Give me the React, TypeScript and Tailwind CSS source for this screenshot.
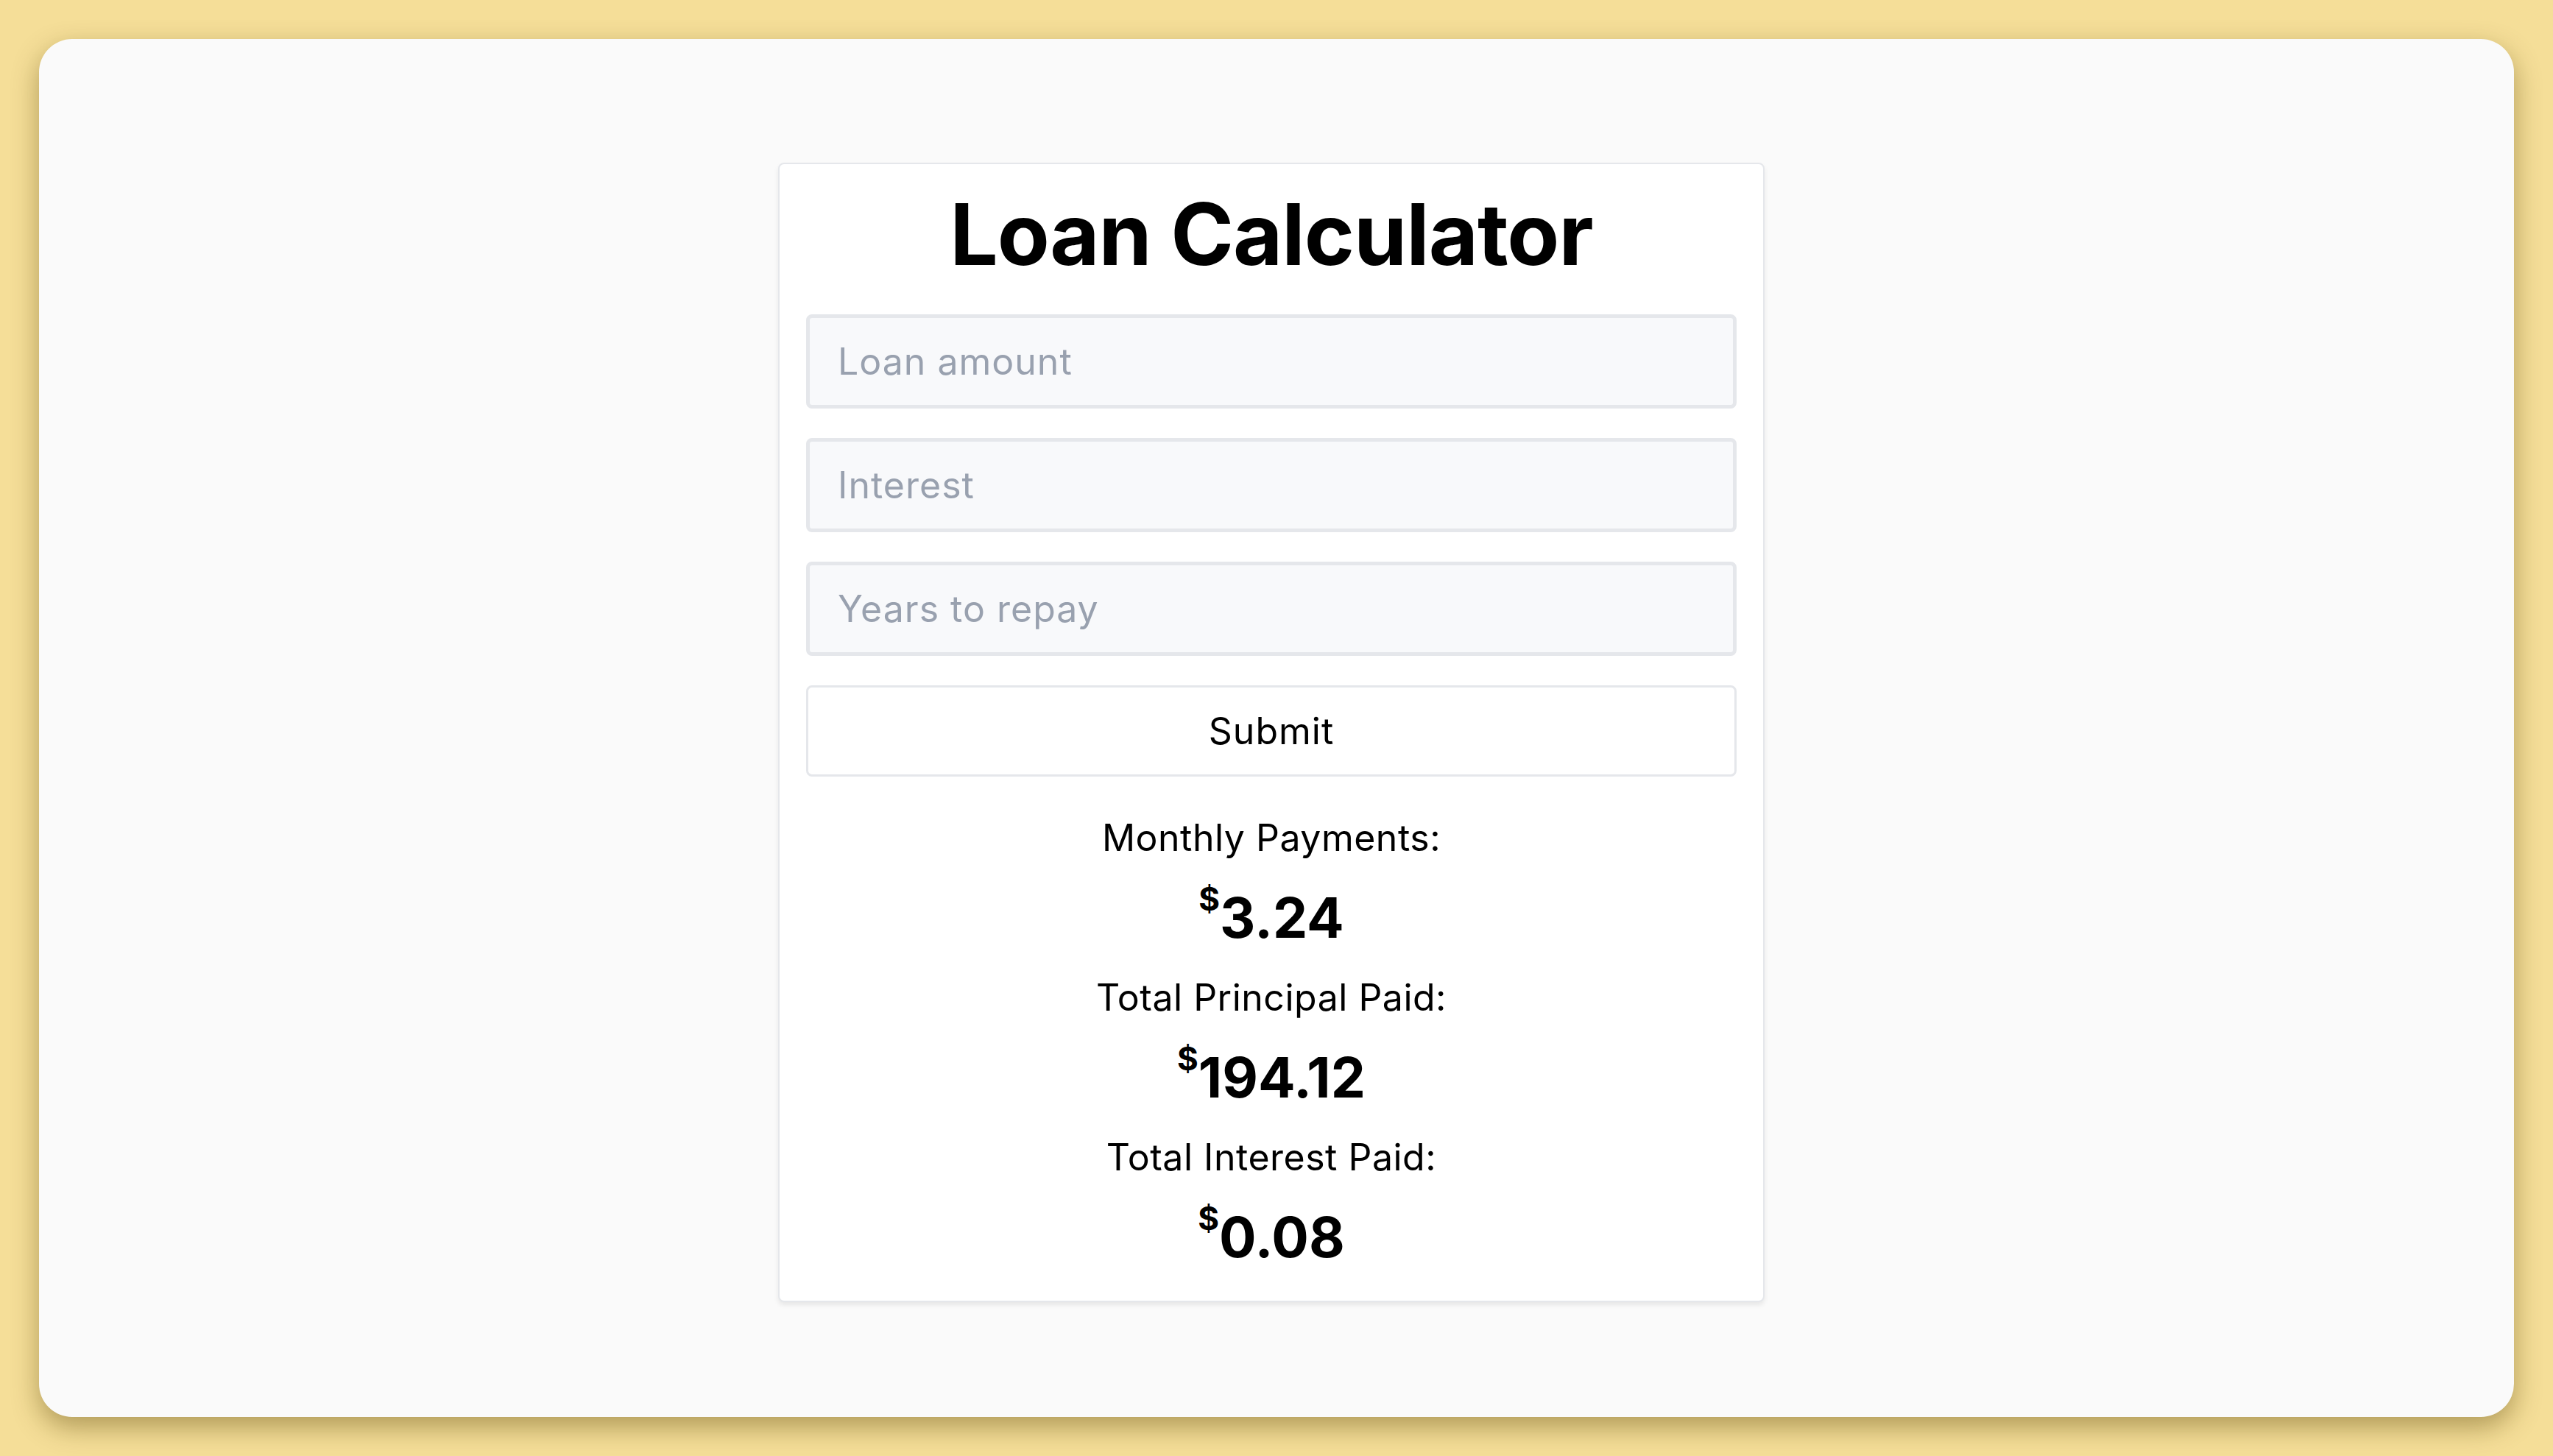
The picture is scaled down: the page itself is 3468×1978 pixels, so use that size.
import React from "react";

const results = [
  { label: "Monthly Payments:", value: "3.24" },
  { label: "Total Principal Paid:", value: "194.12" },
  { label: "Total Interest Paid:", value: "0.08" },
];

const fields = ["Loan amount", "Interest", "Years to repay"];

export default function App() {
  return (
    <div
      className="min-h-screen w-full bg-[#f5de98] p-[53px] flex"
      style={{ fontFamily: "Inter, 'Noto Sans', sans-serif" }}
    >
      <div className="flex-1 rounded-[45px] bg-[#fafafa] shadow-[0_14px_36px_rgba(90,70,10,0.45)] flex justify-center items-start pt-[168px]">
        <div className="w-[1340px] mr-[14px] bg-white border-2 border-gray-200 rounded-[8px] shadow-[0_4px_6px_rgba(0,0,0,0.08)] px-[36px] pt-[37px] pb-[41px] text-black">
          <h1 className="text-[116px] leading-none font-bold text-center tracking-[-1px]">
            Loan Calculator
          </h1>

          <div className="mt-[51px] flex flex-col gap-[40px]">
            {fields.map((f) => (
              <input
                key={f}
                type="text"
                placeholder={f}
                className="h-[128px] w-full rounded-[8px] border-[5px] border-gray-200 bg-[#f8f9fb] px-[38px] text-[50px] tracking-[1px] placeholder:text-gray-400 outline-none"
              />
            ))}
            <button className="h-[124px] w-full rounded-[8px] border-[3px] border-gray-200 bg-white text-[50px] tracking-[1px] text-black">
              Submit
            </button>
          </div>

          <div className="mt-[53px] flex flex-col items-center">
            {results.map((r, i) => (
              <div key={r.label} className={`flex flex-col items-center ${i > 0 ? "mt-[33px]" : ""}`}>
                <p className="text-[50px] leading-[60px] tracking-[0.5px]">{r.label}</p>
                <p className="mt-[34px] text-[75px] leading-[90px] font-bold">
                  <sup className="text-[44px] top-[-0.85em]">$</sup>
                  {r.value}
                </p>
              </div>
            ))}
          </div>
        </div>
      </div>
    </div>
  );
}
